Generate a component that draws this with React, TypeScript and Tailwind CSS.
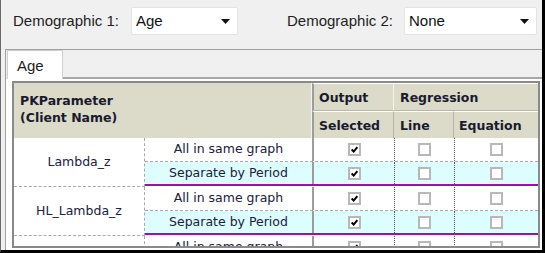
import React from 'react';

const rows = [
  { name: 'Lambda_z' },
  { name: 'HL_Lambda_z' },
  { name: '' },
];

function Check({ checked }: { checked: boolean }) {
  return (
    <div className="w-[13px] h-[13px] border-2 border-[#b8b8b8] bg-white flex items-center justify-center">
      {checked && (
        <svg width="11" height="11" viewBox="0 0 11 11">
          <path d="M2 5.5 L4.5 8 L9 2.5" fill="none" stroke="#000" strokeWidth="2.4" />
        </svg>
      )}
    </div>
  );
}

function Dropdown({ value, width }: { value: string; width: string }) {
  return (
    <div className={`${width} h-[28px] bg-white border border-[#e4e4e4] rounded-[2px] flex items-center justify-between pl-[4px] pr-[7px]`}>
      <span className="text-[15px] text-[#111]">{value}</span>
      <svg width="9" height="5" viewBox="0 0 9 5">
        <path d="M0 0 L9 0 L4.5 5 Z" fill="#111" />
      </svg>
    </div>
  );
}

function SubRow({ label, cyan, last }: { label: string; cyan: boolean; last: boolean }) {
  return (
    <div
      className={`flex h-[24px] ${cyan ? 'bg-[#ddfefe]' : 'bg-white'} ${
        last ? 'border-b-2 border-[#a010a0]' : 'border-b border-dashed border-[#a8a8a8]'
      }`}
    >
      <div className="w-[167px] flex items-center justify-center text-[#20203a]">{label}</div>
      <div className="w-[82px] border-l-2 border-[#9c9c9c] flex items-center justify-center">
        <Check checked={true} />
      </div>
      <div className="w-[60px] border-l border-dotted border-[#555] flex items-center justify-center">
        <Check checked={false} />
      </div>
      <div className="flex-1 border-l border-dotted border-[#555] flex items-center justify-center">
        <Check checked={false} />
      </div>
    </div>
  );
}

export default function App() {
  return (
    <div className="w-[545px] h-[253px] bg-[#f0f0f0] border-l border-[#6a6a6a] border-r-[3px] border-r-black border-b-[3px] border-b-black flex flex-col overflow-hidden font-['Liberation_Sans',sans-serif]">
      <div className="flex h-[49px] pt-[7px] pl-[12px] shrink-0">
        <div className="w-[118px] h-[28px] flex items-center text-[15px] text-[#1e1e1e]">Demographic 1:</div>
        <Dropdown value="Age" width="w-[107px]" />
        <div className="ml-[49px] w-[117px] h-[28px] flex items-center text-[15px] text-[#1e1e1e]">Demographic 2:</div>
        <Dropdown value="None" width="w-[133px]" />
      </div>

      <div className="flex-1 ml-[4px] border-t border-l border-[#a0a0a0] flex flex-col min-h-0">
        <div className="flex h-[29px] shrink-0">
          <div className="ml-[1px] w-[56px] bg-white border-t border-l border-r border-[#cfcfcf] pl-[9px] pt-[4px] text-[15px] text-[#1e1e1e]">
            Age
          </div>
          <div className="flex-1 border-b-2 border-[#a8a8a8]"></div>
        </div>

        <div className="flex-1 min-h-0 bg-white pl-[6px] pr-[2px] pt-[2px] pb-[2px] flex flex-col">
          <div className="flex-1 min-h-0 border-2 border-[#8a8a8a] overflow-hidden font-['DejaVu_Sans',sans-serif] text-[12.5px]">
            <div className="flex h-[55px] bg-[#dcdac8] text-[#1a1a2e] font-bold text-[12.5px] leading-[17px]">
              <div className="w-[298px] pl-[6px] pt-[9px] border-r border-[#f4f4ee]">
                <div>PKParameter</div>
                <div>(Client Name)</div>
              </div>
              <div className="flex-1 flex flex-col">
                <div className="flex h-[28px]">
                  <div className="w-[82px] border-l-2 border-[#9c9c9c] border-t border-t-white border-b border-b-[#b8b6a6] border-r border-r-[#f4f4ee] pl-[5px] flex items-center">
                    Output
                  </div>
                  <div className="flex-1 border-t border-t-white border-b border-b-[#b8b6a6] pl-[6px] flex items-center">
                    Regression
                  </div>
                </div>
                <div className="flex flex-1">
                  <div className="w-[82px] border-l-2 border-[#9c9c9c] border-t border-t-white border-r border-r-[#b8b6a6] pl-[5px] flex items-center">
                    Selected
                  </div>
                  <div className="w-[60px] border-t border-t-white border-r border-r-[#b8b6a6] pl-[6px] flex items-center">
                    Line
                  </div>
                  <div className="flex-1 border-t border-t-white pl-[5px] flex items-center">Equation</div>
                </div>
              </div>
            </div>

            {rows.map((r, i) => (
              <div key={i} className="flex">
                <div className="w-[131px] h-[49px] bg-white border-r border-dashed border-[#a8a8a8] border-b flex items-center justify-center text-[#20203a]">
                  {r.name}
                </div>
                <div className="flex-1 flex flex-col">
                  <SubRow label="All in same graph" cyan={false} last={false} />
                  <SubRow label="Separate by Period" cyan={true} last={true} />
                </div>
              </div>
            ))}
          </div>
        </div>
      </div>
    </div>
  );
}
